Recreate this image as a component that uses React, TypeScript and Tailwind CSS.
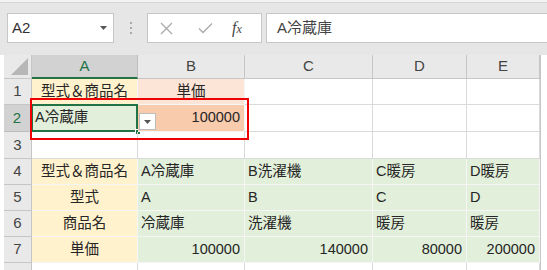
import React from 'react';

const FONT = { fontFamily: '"Liberation Sans", "Noto Sans CJK JP", sans-serif' };

type Cell = {
  text?: string;
  align?: 'left' | 'center' | 'right';
  fill?: string;
};

const Y = 'bg-[#fff2cc]';
const P = 'bg-[#fce4d6]';
const S = 'bg-[#f8cbad]';
const G = 'bg-[#e2efda]';

// rows 1..8, columns A..E
const rows: Cell[][] = [
  [{ text: '型式＆商品名', align: 'center', fill: Y }, { text: '単価', align: 'center', fill: P }, {}, {}, {}],
  [{ text: 'A冷蔵庫', fill: G }, { text: '100000', align: 'right', fill: S }, {}, {}, {}],
  [{}, {}, {}, {}, {}],
  [
    { text: '型式＆商品名', align: 'center', fill: Y },
    { text: 'A冷蔵庫', fill: G },
    { text: 'B洗濯機', fill: G },
    { text: 'C暖房', fill: G },
    { text: 'D暖房', fill: G },
  ],
  [
    { text: '型式', align: 'center', fill: Y },
    { text: 'A', fill: G },
    { text: 'B', fill: G },
    { text: 'C', fill: G },
    { text: 'D', fill: G },
  ],
  [
    { text: '商品名', align: 'center', fill: Y },
    { text: '冷蔵庫', fill: G },
    { text: '洗濯機', fill: G },
    { text: '暖房', fill: G },
    { text: '暖房', fill: G },
  ],
  [
    { text: '単価', align: 'center', fill: Y },
    { text: '100000', align: 'right', fill: G },
    { text: '140000', align: 'right', fill: G },
    { text: '80000', align: 'right', fill: G },
    { text: '200000', align: 'right', fill: G },
  ],
  [{}, {}, {}, {}, {}],
];

const colNames = ['A', 'B', 'C', 'D', 'E'];

const alignClass = {
  left: 'justify-start pl-[3px]',
  center: 'justify-center',
  right: 'justify-end pr-[4px]',
};

export default function App() {
  return (
    <div className="w-[547px] h-[270px] overflow-hidden bg-white text-[#262626]" style={FONT}>
      {/* formula bar */}
      <div className="h-[3px] bg-[#f3f3f3] border-b border-[#d6d6d6]" />
      <div className="h-[52px] bg-[#e6e6e6] flex items-start pt-[10px] pl-[7px]">
        <div className="w-[107px] h-[30px] bg-white border border-[#c6c6c6] flex items-center justify-between pl-[4px] pr-[6px]">
          <span className="text-[15px] text-[#333]">A2</span>
          <svg width="7" height="4" viewBox="0 0 7 4">
            <path d="M0 0 L7 0 L3.5 4 Z" fill="#555" />
          </svg>
        </div>
        <div className="w-[33px] h-[30px] flex flex-col items-center justify-center gap-[3px]">
          <span className="w-[2px] h-[2px] bg-[#a8a8a8]" />
          <span className="w-[2px] h-[2px] bg-[#a8a8a8]" />
          <span className="w-[2px] h-[2px] bg-[#a8a8a8]" />
        </div>
        <div className="w-[115px] h-[30px] bg-white border border-[#c6c6c6] flex items-center">
          <svg width="13" height="13" viewBox="0 0 13 13" className="ml-[12px]">
            <path d="M1 1 L12 12 M12 1 L1 12" stroke="#ababab" strokeWidth="1.3" />
          </svg>
          <svg width="15" height="12" viewBox="0 0 15 12" className="ml-[25px]">
            <path d="M1 6.5 L5 10.5 L14 1.5" stroke="#ababab" strokeWidth="1.4" fill="none" />
          </svg>
          <span
            className="ml-[19px] text-[16px] italic text-[#444]"
            style={{ fontFamily: '"Liberation Serif", serif' }}
          >
            <i>f</i>
            <span className="text-[12px]">x</span>
          </span>
        </div>
        <div className="ml-[4px] flex-1 h-[30px] bg-white border-y border-l border-[#c6c6c6] flex items-center pl-[10px]">
          <span className="text-[15px] text-[#444]">A冷蔵庫</span>
        </div>
      </div>

      {/* sheet */}
      <div className="relative pl-[4px]">
        <div className="grid grid-cols-[28px_106px_107px_128px_94px_73px_3px] grid-rows-[24px_26px_27px_27px_26px_26px_26px_26px_26px]">
          {/* header row */}
          <div className="relative bg-[#e9e9e9] border-r border-b border-[#c6c6c6]">
            <svg width="17" height="17" viewBox="0 0 17 17" className="absolute right-[3px] bottom-[3px]">
              <path d="M17 0 L17 17 L0 17 Z" fill="#b7b7b7" />
            </svg>
          </div>
          {colNames.map((c, i) => (
            <div
              key={c}
              className={
                i === 0
                  ? 'bg-[#d2d2d2] border-r border-[#bdbdbd] border-b-2 border-b-[#217346] flex items-center justify-center text-[15px] text-[#217346]'
                  : 'bg-[#e9e9e9] border-r border-b border-[#c6c6c6] flex items-center justify-center text-[15px] text-[#444]'
              }
            >
              {c}
            </div>
          ))}
          <div className="bg-white border-l border-[#c6c6c6]" />

          {rows.map((row, r) => (
            <React.Fragment key={r}>
              <div
                className={
                  r === 1
                    ? 'bg-[#d2d2d2] border-r-2 border-[#217346] border-b border-b-[#bdbdbd] flex items-center justify-center text-[15px] text-[#217346]'
                    : 'bg-[#e9e9e9] border-r border-b border-[#c6c6c6] flex items-center justify-center text-[15px] text-[#444]'
                }
              >
                {r < 7 ? r + 1 : ''}
              </div>
              {row.map((cell, c) => {
                const selected = r === 1 && c === 0;
                return (
                  <div
                    key={c}
                    className={
                      'relative flex items-center text-[14.5px] whitespace-nowrap overflow-visible border-r border-b ' +
                      (cell.fill ? cell.fill + ' border-[#f5f5f5] ' : 'border-[#dadada] ') +
                      alignClass[cell.align ?? 'left']
                    }
                  >
                    {cell.text}
                    {selected && (
                      <>
                        <div className="absolute -left-[1px] -top-[1px] -right-[1px] -bottom-[1px] border-2 border-[#217346]" />
                        <div className="absolute -right-[4px] -bottom-[4px] w-[6px] h-[6px] bg-[#217346] border border-white" />
                      </>
                    )}
                  </div>
                );
              })}
              <div className="border-l border-[#c6c6c6]" />
            </React.Fragment>
          ))}
        </div>

        {/* data validation dropdown button */}
        <div className="absolute left-[139px] top-[58px] w-[17px] h-[17px] bg-white border border-[#bdbdbd] flex items-center justify-center">
          <svg width="7" height="4" viewBox="0 0 7 4">
            <path d="M0 0 L7 0 L3.5 4 Z" fill="#555" />
          </svg>
        </div>

        {/* red highlight frame */}
        <div className="absolute left-[30px] top-[43px] w-[219px] h-[42px] border-2 border-[#ee0000]" />
      </div>
    </div>
  );
}
